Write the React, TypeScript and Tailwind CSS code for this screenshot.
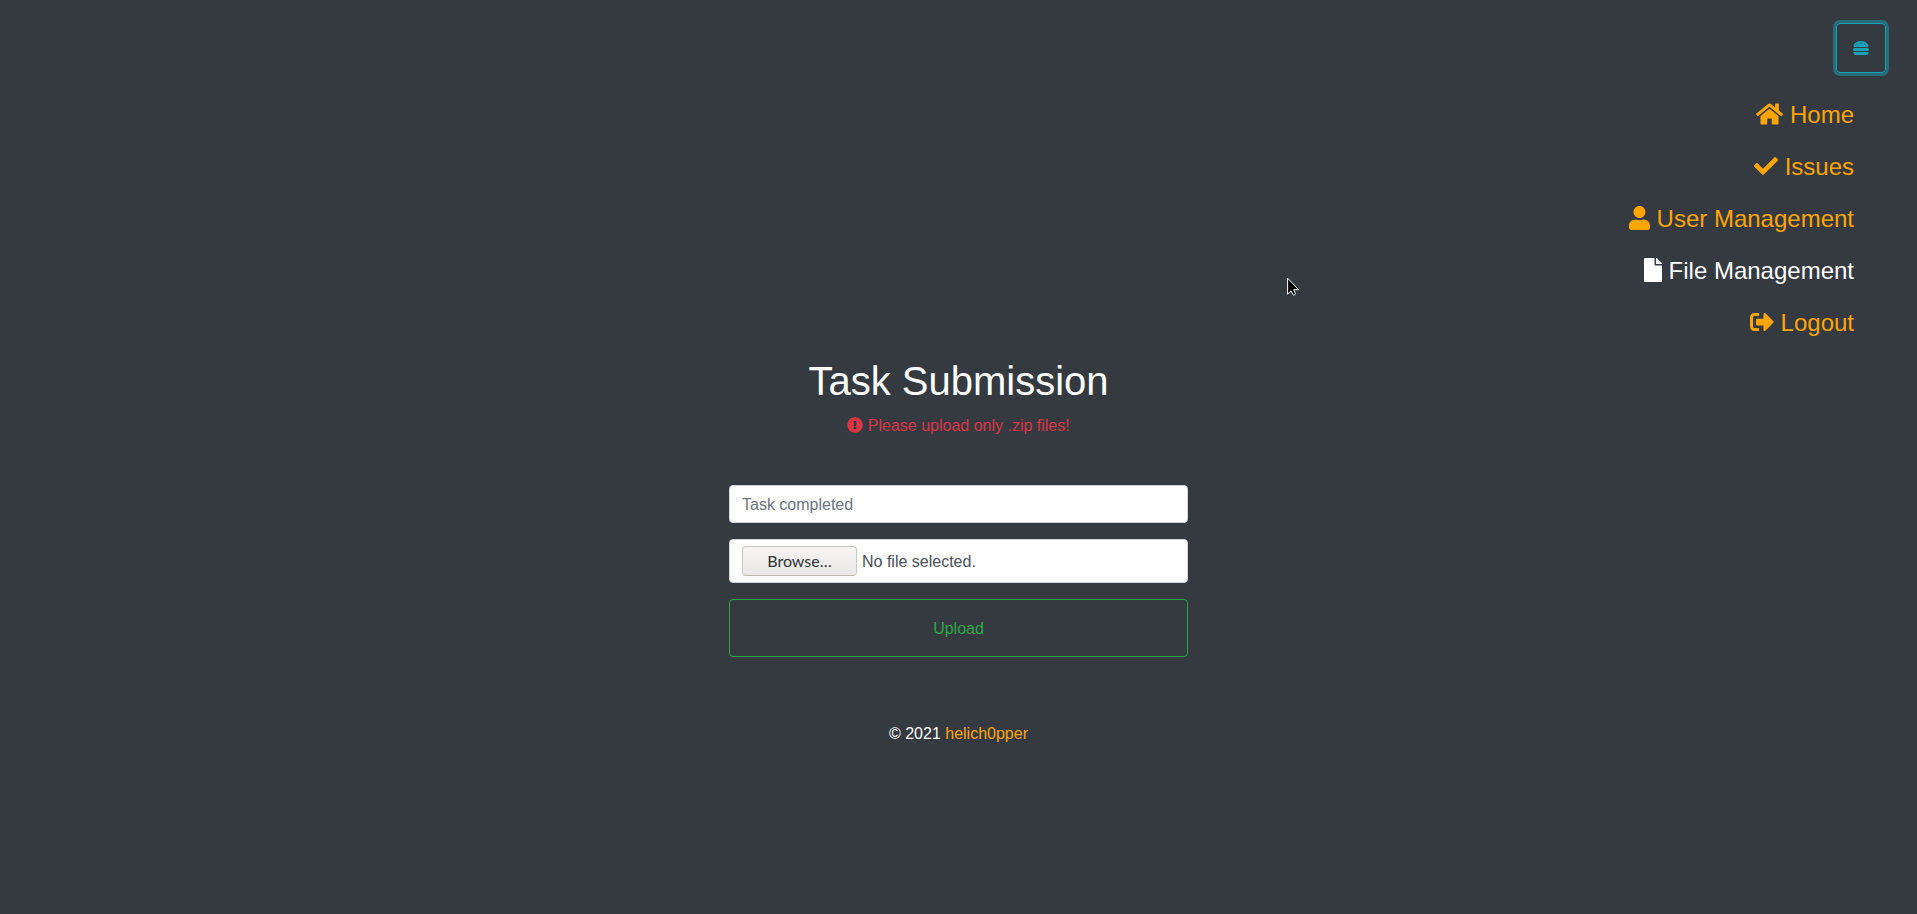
import {
  FaCheck,
  FaExclamationCircle,
  FaFile,
  FaHamburger,
  FaHome,
  FaSignOutAlt,
  FaUser,
} from "react-icons/fa";
import type { IconType } from "react-icons";
import { useState } from "react";

type NavItem = { label: string; icon: IconType; iconWidth: string; active?: boolean };

const navItems: NavItem[] = [
  { label: "Home", icon: FaHome, iconWidth: "w-[27px]" },
  { label: "Issues", icon: FaCheck, iconWidth: "w-6" },
  { label: "User Management", icon: FaUser, iconWidth: "w-[21px]" },
  { label: "File Management", icon: FaFile, iconWidth: "w-[18px]", active: true },
  { label: "Logout", icon: FaSignOutAlt, iconWidth: "w-6" },
];

function Navigation() {
  const [open, setOpen] = useState(true);
  return (
    <header className="flex flex-col items-end gap-4 pt-[23px] pr-[31px]">
      <button
        type="button"
        aria-label="Toggle menu"
        aria-expanded={open}
        onClick={() => setOpen(!open)}
        className="flex size-[50px] items-center justify-center rounded-sm border border-[#17a2b8] text-[#17a2b8] ring-3 ring-[#17a2b8]/50"
      >
        <FaHamburger className="size-4" />
      </button>
      {open && (
        <nav className="pr-8 text-right text-2xl">
          <ul>
            {navItems.map(({ label, icon: Icon, iconWidth, active }) => (
              <li key={label}>
                <a
                  href="#"
                  aria-current={active ? "page" : undefined}
                  className={`block py-2 leading-9 ${active ? "text-white" : "text-[#ffa500]"}`}
                >
                  <Icon className={`inline-block h-6 align-[-3px] ${iconWidth}`} /> {label}
                </a>
              </li>
            ))}
          </ul>
        </nav>
      )}
    </header>
  );
}

function TaskForm() {
  const [fileName, setFileName] = useState("No file selected.");
  return (
    <form className="mt-[47px] flex w-full max-w-[459px] flex-col gap-4" onSubmit={(e) => e.preventDefault()}>
      <input
        type="text"
        aria-label="Task completed"
        placeholder="Task completed"
        className="h-[38px] w-full rounded-sm border border-[#ced4da] bg-white px-3 pt-0.5 text-[#495057] placeholder:text-[#6c757d] placeholder:opacity-100"
      />
      <label className="flex h-11 w-full items-center gap-[5px] rounded-sm border border-[#ced4da] bg-white px-3 text-[#495057]">
        <input
          type="file"
          accept=".zip"
          className="sr-only"
          onChange={(e) => setFileName(e.target.files?.[0]?.name ?? "No file selected.")}
        />
        <span className="flex h-[30px] w-[115px] items-center justify-center rounded-sm border border-[#cdc7c2] border-b-[#bfb8b1] bg-linear-to-b from-[#f6f5f4] to-[#e9e7e5] font-[Lato,sans-serif] text-base text-[#2e3436]">
          Browse…
        </span>
        <span className="pt-0.5">{fileName}</span>
      </label>
      <button type="submit" className="h-[58px] w-full rounded-sm border border-[#28a745] pt-0.5 text-[#28a745]">
        Upload
      </button>
    </form>
  );
}

function Pointer() {
  return (
    <svg
      aria-hidden="true"
      viewBox="0 0 12 19"
      className="pointer-events-none absolute top-[277px] left-[1287px] h-[19px] w-3"
    >
      <path
        d="M.6 1.2v16l3.6-3.3 1.7 3.6c.5 1.2 2.9.2 2.5-1.1l-1.7-3.7h5z"
        fill="#000"
        stroke="#fff"
        strokeLinejoin="round"
      />
    </svg>
  );
}

export default function App() {
  return (
    <div className="relative min-h-screen overflow-hidden bg-[#343a40] font-['Liberation_Sans',Arial,sans-serif] text-base text-white">
      <Navigation />
      <main className="flex flex-col items-center px-4 pt-2">
        <h1 className="mb-[9px] text-[40px] leading-12">Task Submission</h1>
        <p className="text-[#dc3545]">
          <FaExclamationCircle className="inline-block size-4 align-[-2px]" /> Please upload only .zip files!
        </p>
        <TaskForm />
      </main>
      <footer className="mt-[65px] text-center">
        © 2021{" "}
        <a href="#" className="text-[#ffa500]">
          helich0pper
        </a>
      </footer>
      <Pointer />
    </div>
  );
}
